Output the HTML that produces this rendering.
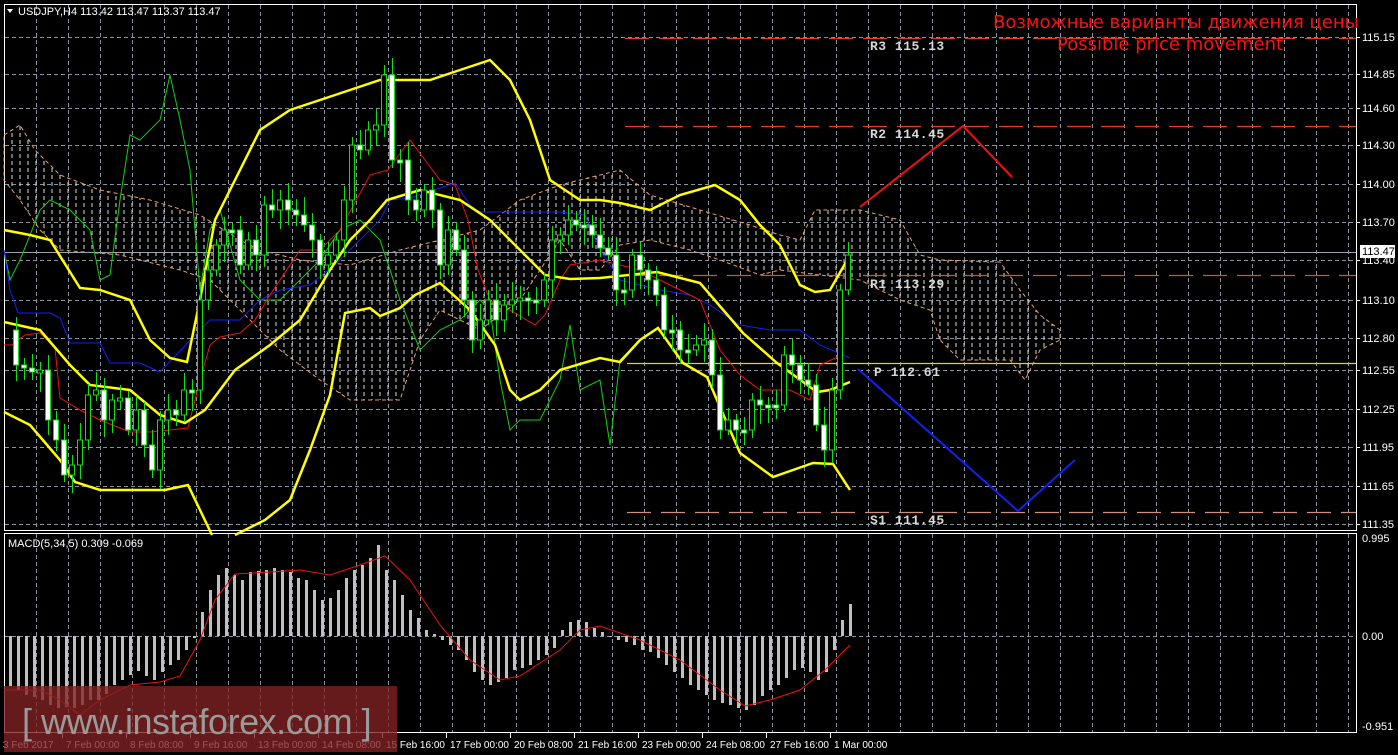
<!DOCTYPE html>
<html><head><meta charset="utf-8"><style>
html,body{margin:0;padding:0;background:#000;width:1398px;height:755px;overflow:hidden}
svg{display:block}
text{font-family:"Liberation Sans","DejaVu Sans",sans-serif}
text.mono{font-family:"Liberation Mono","DejaVu Sans Mono",monospace}
text.ru{font-family:"DejaVu Sans","Liberation Sans",sans-serif}
</style></head><body>
<svg id="s" width="1398" height="755" viewBox="0 0 1398 755" xmlns="http://www.w3.org/2000/svg">
<defs>
<pattern id="hatch" width="8" height="7" patternUnits="userSpaceOnUse">
<line x1="4" y1="0" x2="4" y2="4" stroke="#ddd" stroke-width="1"/>
</pattern>
</defs>
<rect width="1398" height="755" fill="#000"/>
<g id="grid" stroke="#8a93a0" stroke-width="1" stroke-dasharray="4,3"></g>
<rect x="4.5" y="4.5" width="1352" height="526" fill="none" stroke="#fff"/>
<rect x="4.5" y="533.5" width="1352" height="199" fill="none" stroke="#fff"/>
<polygon fill="url(#hatch)" stroke="#e8a070" stroke-width="1" stroke-dasharray="4,3" points="4,135 20,125 35,150 60,175 100,190 150,200 200,215 240,240 260,250 300,260 350,265 400,250 440,240 480,230 520,200 560,185 600,175 620,170 650,195 700,210 750,225 780,235 800,240 815,210 860,210 900,220 920,255 940,260 1000,262 1020,290 1040,315 1060,330 1060,340 1040,350 1025,380 1010,360 960,360 940,340 930,310 900,300 860,280 820,275 780,270 760,275 720,260 690,250 650,240 620,245 600,270 580,270 560,240 520,300 480,330 440,310 420,340 400,400 350,400 320,380 280,350 250,320 230,300 210,280 180,270 120,255 60,250 40,230 20,200 4,180"/>
<line x1="5" y1="252.5" x2="1356" y2="252.5" stroke="#9aa4b0"/>
<line x1="625" y1="38.5" x2="1356" y2="38.5" stroke="#e04020" stroke-width="1.2" stroke-dasharray="24,10"/>
<line x1="625" y1="126.5" x2="1356" y2="126.5" stroke="#e04020" stroke-width="1.2" stroke-dasharray="24,10"/>
<line x1="625" y1="275.5" x2="1356" y2="275.5" stroke="#e05020" stroke-width="1.2" stroke-dasharray="24,10"/>
<line x1="627" y1="363.5" x2="1356" y2="363.5" stroke="#e8d020" stroke-width="1.2"/>
<line x1="627" y1="512.5" x2="1356" y2="512.5" stroke="#d09080" stroke-width="1.2" stroke-dasharray="24,10"/>
<polyline fill="none" stroke="#10d010" stroke-width="1" points="4,250 10,280 20,260 40,210 50,200 70,210 90,230 100,280 110,275 120,200 130,135 140,140 160,120 170,75 180,120 190,170 200,290 210,230 220,210 240,280 260,300 280,300 300,280 320,260 340,230 360,220 380,240 400,300 420,350 440,330 460,320 480,300 490,310 500,380 510,430 520,420 540,420 560,380 570,325 580,390 600,380 610,445 620,360 640,340"/>
<polyline fill="none" stroke="#1020ff" stroke-width="1" points="4,250 10,290 18,313 50,313 60,318 70,343 100,343 110,363 140,363 160,372 200,330 210,320 240,320 260,300 280,290 310,285 340,260 380,220 390,200 410,198 455,183 470,205 480,212 560,212 585,215 600,250 620,280 660,290 690,295 710,305 740,325 770,330 800,330 820,345 850,358"/>
<polyline fill="none" stroke="#f01010" stroke-width="1" points="4,345 12,345 25,335 40,333 55,348 60,398 80,410 100,420 130,432 150,432 170,430 188,428 200,380 210,345 220,337 240,333 255,320 270,295 300,250 320,250 340,230 370,175 388,170 410,140 425,160 440,180 455,185 468,220 478,270 490,300 500,310 510,310 535,325 545,315 560,280 570,265 600,260 620,265 640,270 680,290 700,300 720,350 740,375 760,390 790,390 810,400 820,365 840,356"/>
<g fill="none" stroke="#ffff00" stroke-width="2.5">
<polyline points="4,230 30,235 50,240 80,288 100,290 130,300 150,340 170,358 187,362 200,300 215,220 240,170 260,130 290,110 320,100 350,90 380,80 430,80 460,70 490,60 510,80 530,120 550,180 580,200 600,200 620,203 650,210 680,195 715,185 740,200 760,225 780,245 800,285 815,292 830,290 850,255"/>
<polyline points="4,322 40,330 70,365 90,385 130,390 160,415 185,423 205,410 235,370 270,345 300,320 330,270 350,240 370,220 387,200 420,190 460,200 490,220 520,250 545,275 570,279 600,278 657,272 700,283 743,333 777,363 817,392 830,390 850,382"/>
<polyline points="4,412 30,425 60,460 75,482 100,490 130,490 165,490 188,485 200,510 212,535"/>
<polyline points="235,535 265,520 290,500 310,450 330,395 345,313 370,308 380,316 400,308 415,295 440,283 470,310 495,345 510,390 520,400 540,390 560,370 600,358 620,362 640,340 658,328 683,363 707,377 740,453 773,477 813,463 833,464 850,490"/>
</g>
<g id="candles"></g>
<polyline points="860,207 963,126 1012,177" fill="none" stroke="#f01010" stroke-width="2"/>
<polyline points="858,369 1018,511 1075,460" fill="none" stroke="#1020f0" stroke-width="2"/>
<g font-size="13" fill="#d8d8d8" font-weight="bold">
<text class="mono" x="870" y="50" letter-spacing="0.5">R3 115.13</text>
<text class="mono" x="870" y="138" letter-spacing="0.5">R2 114.45</text>
<text class="mono" x="870" y="288" letter-spacing="0.5">R1 113.29</text>
<text class="mono" x="874" y="376" letter-spacing="0.5">P 112.61</text>
<text class="mono" x="870" y="524" letter-spacing="0.5">S1 111.45</text>
</g>
<text class="ru" x="993" y="28" font-size="18" fill="#ff1010">Возможные варианты движения цены</text>
<text class="ru" x="1057" y="50" font-size="18" fill="#ff1010">Possible price movement</text>
<rect x="1357" y="0" width="41" height="32" fill="#000"/>
<polygon points="7,9 13,9 10,13" fill="#fff"/>
<text x="18" y="15" font-size="11" fill="#fff">USDJPY,H4  113.42 113.47 113.37 113.47</text>
<g font-size="11" fill="#fff" id="axis"></g>
<rect x="1360" y="245" width="35" height="13" fill="#fff"/>
<text x="1362" y="255" font-size="11" fill="#000">113.47</text>
<line x1="5" y1="636.5" x2="1356" y2="636.5" stroke="#8a93a0" stroke-dasharray="4,3"/>
<g id="hist" fill="#c0c0c0"></g>
<polyline fill="none" stroke="#f01010" stroke-width="1" points="4,690 40,690 60,700 80,715 100,700 130,685 160,682 180,676 200,640 215,600 235,574 270,572 300,570 330,575 360,565 385,556 410,580 440,625 470,660 500,680 520,676 560,650 580,630 600,626 640,640 680,660 720,690 745,706 770,700 800,690 825,670 850,645"/>
<text x="8" y="547" font-size="11" fill="#fff">MACD(5,34,5) 0.309 -0.069</text>
<text x="1362" y="542" font-size="11" fill="#fff">0.995</text>
<text x="1362" y="640" font-size="11" fill="#fff">0.00</text>
<text x="1362" y="730" font-size="11" fill="#fff">-0.951</text>
<g font-size="10" fill="#fff" id="dates"></g>
<rect x="4" y="686" width="393" height="66" fill="rgba(130,35,35,0.78)"/>
<text x="22" y="734" font-size="36" fill="#9a9a9a" letter-spacing="-0.5">[ www.instaforex.com ]</text>
</svg>
<script>
var NS="http://www.w3.org/2000/svg";
function el(p,t,a,txt){var e=document.createElementNS(NS,t);for(var k in a)e.setAttribute(k,a[k]);if(txt)e.textContent=txt;p.appendChild(e);return e;}
var g=document.getElementById('grid');
for(var x=36;x<1356;x+=32){el(g,'line',{x1:x+.5,y1:5,x2:x+.5,y2:530});el(g,'line',{x1:x+.5,y1:534,x2:x+.5,y2:732});}
var py=[37,74,108,145,184,222,260,300,338,370,409,447,486,524];
var pl=["115.15","114.85","114.60","114.30","114.00","113.70","113.40","113.10","112.80","112.55","112.25","111.95","111.65","111.35"];
var ax=document.getElementById('axis');
py.forEach(function(y,i){el(g,'line',{x1:5,y1:y+.5,x2:1356,y2:y+.5});el(ax,'line',{x1:1356,y1:y+.5,x2:1360,y2:y+.5,stroke:'#fff'});el(ax,'text',{x:1362,y:y+4},pl[i]);});
var c=[330,365,368,372,370,420,440,475,465,440,395,390,420,400,398,430,410,445,470,420,410,415,390,390,300,270,245,230,230,265,240,255,205,210,200,210,215,225,240,265,255,240,200,145,150,130,125,75,160,160,200,210,190,210,265,230,250,300,340,320,300,320,305,300,298,300,300,280,240,235,220,225,225,235,248,255,290,290,255,270,280,295,330,330,350,350,345,340,375,430,420,430,430,400,405,405,405,355,365,380,385,425,450,390,290,255];
var cg=document.getElementById('candles');
for(var i=1;i<c.length;i++){var x=8+8*i,o=c[i-1],cl=c[i];var t=Math.min(o,cl),b=Math.max(o,cl);if(b-t<3){b=t+3;}
var w1=6+(i*7%13),w2=5+(i*11%15);
el(cg,'line',{x1:x+.5,y1:t-w1,x2:x+.5,y2:b+w2,stroke:'#10e010'});
el(cg,'rect',{x:x-2.5,y:t,width:5,height:b-t,fill:(cl<o?'#000':'#fff'),stroke:'#10e010','stroke-width':1});}
var h=[686,690,695,697,700,705,708,707,708,705,700,700,694,685,680,675,671,676,680,672,665,660,650,638,612,590,575,568,575,580,572,571,570,568,570,572,578,580,590,600,598,590,578,570,565,558,545,570,580,595,610,618,630,634,640,645,650,660,672,680,685,682,678,670,668,665,660,655,648,630,622,620,622,628,632,636,640,642,645,650,652,658,665,672,678,685,690,695,700,703,705,708,710,705,696,690,685,678,670,668,672,680,672,650,620,604];
var hg=document.getElementById('hist');
h.forEach(function(y,i){var x=9+8*i;var t=Math.min(y,636),b=Math.max(y,636);el(hg,'rect',{x:x,y:t,width:3,height:Math.max(b-t,1)});});
var d=["3 Feb 2017","7 Feb 00:00","8 Feb 08:00","9 Feb 16:00","13 Feb 00:00","14 Feb 08:00","15 Feb 16:00","17 Feb 00:00","20 Feb 08:00","21 Feb 16:00","23 Feb 00:00","24 Feb 08:00","27 Feb 16:00","1 Mar 00:00"];
var dg=document.getElementById('dates');
d.forEach(function(s,i){var x=i==0?3:2+64*i;el(dg,'text',{x:x,y:748},s);if(i>0)el(dg,'line',{x1:x-3.5,y1:733,x2:x-3.5,y2:738,stroke:'#fff'});});
</script>
</body></html>
